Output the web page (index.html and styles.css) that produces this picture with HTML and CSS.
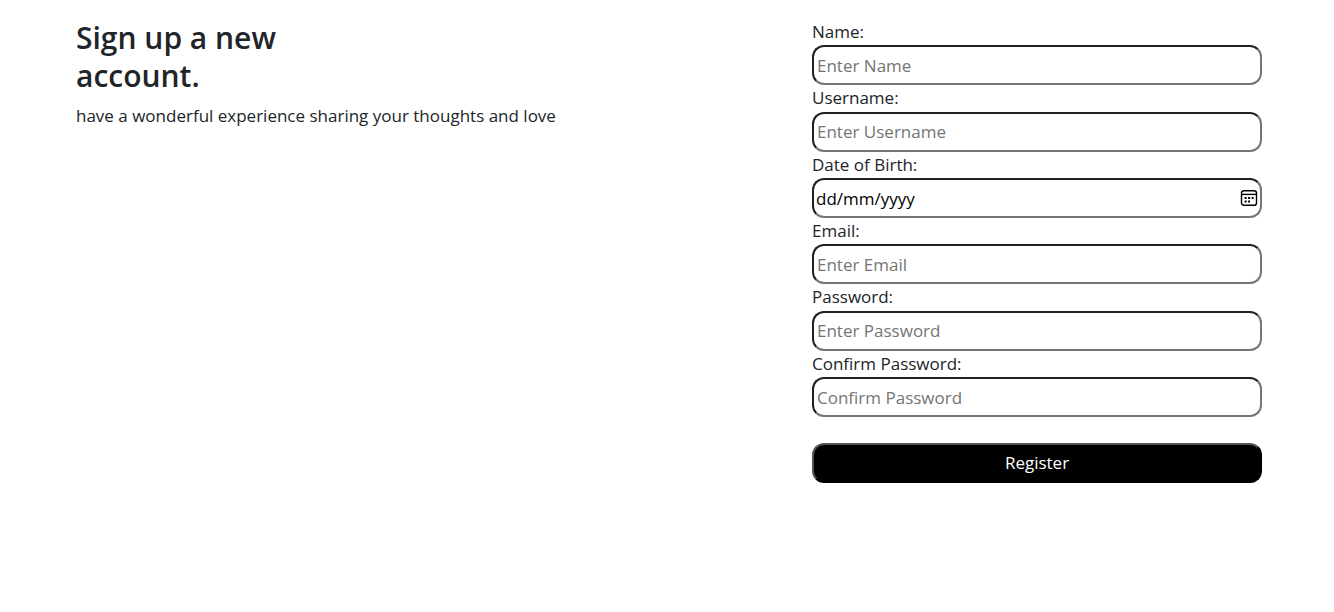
FILE: index.html
```
<!DOCTYPE html>
<html lang="en">
<head>
<meta charset="utf-8">
<meta name="viewport" content="width=device-width, initial-scale=1">
<title>Sign up</title>
<link rel="stylesheet" href="styles.css">
</head>
<body>
<main class="page">
  <section class="intro">
    <h1 class="title">Sign up a new account.</h1>
    <p class="tagline">have a wonderful experience sharing your thoughts and love</p>
  </section>
  <form class="form">
    <label class="label" for="name">Name:</label>
    <input class="field" id="name" type="text" placeholder="Enter Name">
    <label class="label" for="username">Username:</label>
    <input class="field" id="username" type="text" placeholder="Enter Username">
    <label class="label" for="dob">Date of Birth:</label>
    <div class="date">
      <input class="field date-input" id="dob" type="text" placeholder="dd/mm/yyyy">
      <button class="date-button" type="button" aria-label="Show date picker">
        <svg class="date-icon" viewBox="0 0 18 18" fill="none" stroke="#000" stroke-width="1.4"><rect x="1.5" y="1.7" width="15" height="14.6" rx="2.4"/><path d="M1.5 5.4h15"/><path fill="#000" stroke="none" d="M4.6 8h2v2h-2zM8.1 8h2v2h-2zM11.6 8h2v2h-2zM4.6 11.4h2v2h-2zM8.1 11.4h2v2h-2z"/></svg>
      </button>
    </div>
    <label class="label" for="email">Email:</label>
    <input class="field" id="email" type="email" placeholder="Enter Email">
    <label class="label" for="password">Password:</label>
    <input class="field" id="password" type="password" placeholder="Enter Password">
    <label class="label" for="confirm">Confirm Password:</label>
    <input class="field" id="confirm" type="password" placeholder="Confirm Password">
    <button class="register" type="submit">Register</button>
  </form>
</main>
</body>
</html>
```
FILE: styles.css
```
* { box-sizing: border-box; }
body {
  margin: 0;
  background: #fff;
  color: #212529;
  font-family: "Segoe UI", "Open Sans", "Noto Sans", sans-serif;
  font-size: 17px;
  line-height: 1.55;
}
.page {
  display: flex;
  justify-content: space-between;
  gap: 24px;
  padding: 19px 72px 24px 76px;
}
.intro { flex: 0 1 500px; }
.title {
  max-width: 240px;
  margin: 0 0 8px;
  font-size: 30px;
  line-height: 38px;
  font-weight: 600;
}
.tagline { margin: 0; }
.form {
  display: flex;
  flex-direction: column;
  flex: 0 1 450px;
}
.field {
  width: 100%;
  height: 40px;
  padding: 1px 3px;
  border: 2px inset #767676;
  border-radius: 12px;
  background: #fff;
  color: #000;
  font: inherit;
}
.field::placeholder { color: #757575; opacity: 1; }
.date { position: relative; display: flex; }
.date-input { padding-left: 2px; }
.date-input::placeholder { color: #000; }
.date-button {
  position: absolute;
  top: 0;
  right: 4px;
  height: 100%;
  padding: 0;
  border: 0;
  background: none;
}
.date-icon { display: block; width: 18px; height: 18px; }
.register {
  height: 40px;
  margin-top: 26px;
  border: 2px outset #000;
  border-radius: 12px;
  background: #000;
  color: #fff;
  font: inherit;
}
```
